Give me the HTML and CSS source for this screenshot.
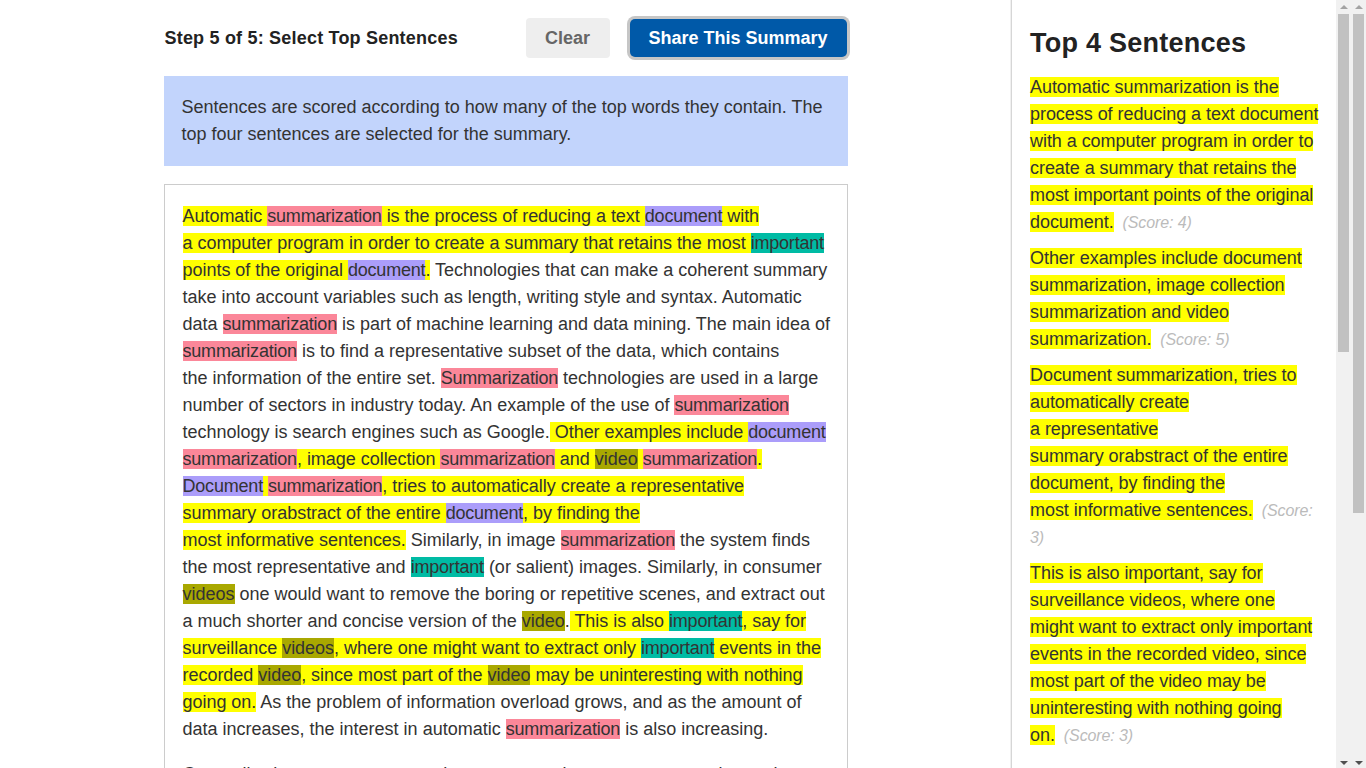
FILE: index.html
```html
<!DOCTYPE html>
<html lang="en">
<head>
<meta charset="utf-8">
<title>Summarizer - Step 5</title>
<link rel="stylesheet" href="styles.css">
</head>
<body>
<div class="app">
  <main class="main">
    <div class="column">
      <header class="header">
        <h1 class="title">Step 5 of 5: Select Top Sentences</h1>
        <div class="actions">
          <button class="btn btn-clear">Clear</button>
          <button class="btn btn-share">Share This Summary</button>
        </div>
      </header>
      <div class="intro">Sentences are scored according to how many of the top words they contain. The top four sentences are selected for the summary.</div>
      <div class="article">
        <p><span class="hl">Automatic <span class="k-sum">summarization</span> is the process of reducing a text <span class="k-doc">document</span> with<br>a computer program in order to create a summary that retains the most <span class="k-imp">important</span> points of the original <span class="k-doc">document</span>.</span> Technologies that can make a coherent summary take into account variables such as length, writing style and syntax. Automatic data <span class="k-sum">summarization</span> is part of machine learning and data mining. The main idea of <span class="k-sum">summarization</span> is to find a representative subset of the data, which contains<br>the information of the entire set. <span class="k-sum">Summarization</span> technologies are used in a large number of sectors in industry today. An example of the use of <span class="k-sum">summarization</span> technology is search engines such as Google.<span class="hl"> Other examples include <span class="k-doc">document</span> <span class="k-sum">summarization</span>, image collection <span class="k-sum">summarization</span> and <span class="k-vid">video</span> <span class="k-sum">summarization</span>.</span> <span class="hl"><span class="k-doc">Document</span> <span class="k-sum">summarization</span>, tries to automatically create a representative<br>summary orabstract of the entire <span class="k-doc">document</span>, by finding the<br>most informative sentences.</span> Similarly, in image <span class="k-sum">summarization</span> the system finds the most representative and <span class="k-imp">important</span> (or salient) images. Similarly, in consumer <span class="k-vid">videos</span> one would want to remove the boring or repetitive scenes, and extract out a much shorter and concise version of the <span class="k-vid">video</span>.<span class="hl"> This is also <span class="k-imp">important</span>, say for surveillance <span class="k-vid">videos</span>, where one might want to extract only <span class="k-imp">important</span> events in the recorded <span class="k-vid">video</span>, since most part of the <span class="k-vid">video</span> may be uninteresting with nothing going on.</span> As the problem of information overload grows, and as the amount of data increases, the interest in automatic <span class="k-sum">summarization</span> is also increasing.</p>
        <p>Generally, there are two approaches to automatic summary: extraction and abstraction of text.</p>
      </div>
    </div>
  </main>
  <aside class="sidebar">
    <h2 class="side-title">Top 4 Sentences</h2>
    <p class="sentence"><span class="hl">Automatic summarization is the process of reducing a text document with a computer program in order to create a summary that retains the most important points of the original document.</span>&nbsp;<span class="score">(Score: 4)</span></p>
    <p class="sentence"><span class="hl">Other examples include document summarization, image collection summarization and video summarization.</span>&nbsp;<span class="score">(Score: 5)</span></p>
    <p class="sentence"><span class="hl">Document summarization, tries to automatically create<br>a representative<br>summary orabstract of the entire document, by finding the<br>most informative sentences.</span>&nbsp;<span class="score">(Score: 3)</span></p>
    <p class="sentence"><span class="hl">This is also important, say for surveillance videos, where one might want to extract only important events in the recorded video, since most part of the video may be uninteresting with nothing going on.</span>&nbsp;<span class="score">(Score: 3)</span></p>
  </aside>
  <div class="scrollbar">
    <div class="sb-btn"><span class="arrow-up"></span></div>
    <div class="sb-track"><div class="sb-thumb sb-thumb-side"></div></div>
    <div class="sb-btn"><span class="arrow-down"></span></div>
  </div>
  <div class="scrollbar">
    <div class="sb-btn"><span class="arrow-up"></span></div>
    <div class="sb-track"><div class="sb-thumb sb-thumb-page"></div></div>
    <div class="sb-btn"><span class="arrow-down"></span></div>
  </div>
</div>
</body>
</html>
```

FILE: styles.css
```css
* {
  box-sizing: border-box;
}

html, body {
  margin: 0;
  padding: 0;
  height: 100%;
  overflow: hidden;
  background: #fff;
}

body {
  font-family: "Liberation Sans", Arial, sans-serif;
  font-size: 18px;
  line-height: 27px;
  color: #333;
}

.app {
  display: flex;
  height: 768px;
}

.main {
  flex: 1 1 auto;
  min-width: 0;
  overflow: hidden;
}

.column {
  width: 684px;
  margin: 0 auto;
}

.header {
  display: flex;
  align-items: center;
  height: 44px;
  margin: 16px 0;
}

.title {
  margin: 0;
  padding-left: 1px;
  font-size: 18px;
  font-weight: 700;
  color: #222;
  letter-spacing: 0.2px;
}

.actions {
  display: flex;
  align-items: center;
  gap: 20px;
  margin-left: auto;
}

.btn {
  font-family: "Liberation Sans", Arial, sans-serif;
  font-size: 18px;
  font-weight: 700;
  border: 0;
  padding: 0;
  cursor: pointer;
}

.btn-clear {
  width: 84px;
  height: 40px;
  border-radius: 4px;
  background: #eeeeee;
  color: #666;
}

.btn-share {
  width: 217px;
  height: 38px;
  margin-right: 1px;
  border-radius: 5px;
  background: #0059a8;
  color: #fff;
  box-shadow: 0 0 0 3px #c6c6c6;
}

.intro {
  background: #c2d4fc;
  padding: 18px;
  margin-bottom: 18px;
}

.article {
  border: 1px solid #cccccc;
  padding: 18px 12px 18px 18px;
}

.article p {
  margin: 0 0 18px;
}

.hl {
  background: #ffff00;
}

.article .hl {
  letter-spacing: -0.03px;
}

.k-sum {
  background: #fb8799;
}

.k-doc {
  background: #ab9dfa;
}

.k-imp {
  background: #00bba4;
}

.k-vid {
  background: #a9a800;
}

.article .k-sum,
.article .k-doc,
.article .k-imp {
  letter-spacing: -0.2px;
}

.sidebar {
  flex: 0 0 325px;
  width: 325px;
  border-left: 1px solid #d6d6d6;
  box-shadow: -1px 0 0 #f0f0f0;
  padding: 28px 14px 0 18px;
  overflow: hidden;
  background: #fff;
}

.side-title {
  margin: 0 0 15px;
  font-size: 27px;
  line-height: 31px;
  font-weight: 700;
  color: #222;
  letter-spacing: 0.25px;
}

.sentence {
  margin: 0 0 9px;
  letter-spacing: -0.05px;
}

.score {
  margin-left: 4px;
  font-size: 16px;
  font-style: italic;
  color: #bbbbbb;
  letter-spacing: -0.1px;
}

.scrollbar {
  flex: 0 0 15px;
  width: 15px;
  display: flex;
  flex-direction: column;
  background: #f1f1f1;
}

.sb-btn {
  height: 14px;
  flex: 0 0 14px;
  display: flex;
  align-items: center;
  justify-content: center;
}

.sb-track {
  flex: 1 1 auto;
  padding: 0 2px;
}

.sb-thumb {
  background: #c1c1c1;
}

.sb-thumb-side {
  height: 338px;
}

.sb-thumb-page {
  height: 499px;
}

.arrow-up {
  width: 0;
  height: 0;
  border-left: 4px solid transparent;
  border-right: 4px solid transparent;
  border-bottom: 4px solid #a3a3a3;
}

.arrow-down {
  width: 0;
  height: 0;
  border-left: 4px solid transparent;
  border-right: 4px solid transparent;
  border-top: 4px solid #505050;
  margin-top: 4px;
}
```
